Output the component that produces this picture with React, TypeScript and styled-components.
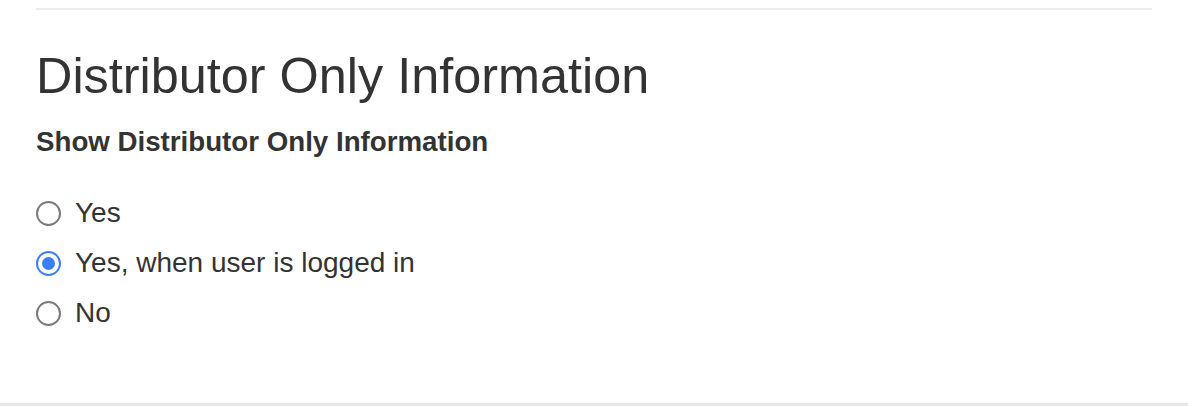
import React, { useState } from 'react'
import styled, { createGlobalStyle } from 'styled-components'

const GlobalStyle = createGlobalStyle`
  html, body {
    margin: 0;
    padding: 0;
    background: #ffffff;
  }
  body {
    font-family: 'Liberation Sans', Arial, Helvetica, sans-serif;
    color: #333333;
  }
`

const Page = styled.div`
  height: 406px;
  display: flex;
  flex-direction: column;
  box-sizing: border-box;
  border-bottom: 3px solid #e6e6e6;
`

const Section = styled.section`
  flex: 1;
  margin: 0 36px;
  padding-top: 8px;
`

const Rule = styled.hr`
  margin: 0;
  border: 0;
  border-top: 2px solid #ececec;
`

const Heading = styled.h2`
  margin: 38px 0 0;
  font-size: 50.4px;
  line-height: 56px;
  font-weight: 400;
  color: #333333;
`

const FieldLabel = styled.h4`
  margin: 22px 0 0;
  font-size: 27.7px;
  line-height: 32px;
  font-weight: 700;
  color: #333333;
`

const Options = styled.div`
  margin-top: 30px;
  display: flex;
  flex-direction: column;
`

const Option = styled.label`
  height: 50px;
  display: flex;
  align-items: center;
  gap: 14px;
  font-size: 28px;
  color: #333333;
  cursor: pointer;
`

const Radio = styled.input.attrs({ type: 'radio' })`
  appearance: none;
  -webkit-appearance: none;
  margin: 0;
  width: 25px;
  height: 25px;
  box-sizing: border-box;
  border-radius: 50%;
  border: 2px solid #7a7a7a;
  background: #ffffff;
  display: grid;
  place-items: center;
  cursor: pointer;

  &:checked {
    border-color: #3a7ff6;
  }

  &:checked::after {
    content: '';
    width: 13px;
    height: 13px;
    border-radius: 50%;
    background: #3a7ff6;
  }
`

const choices = ['Yes', 'Yes, when user is logged in', 'No']

export default function App() {
  const [value, setValue] = useState(choices[1])

  return (
    <Page>
      <GlobalStyle />
      <Section>
        <Rule />
        <Heading>Distributor Only Information</Heading>
        <FieldLabel>Show Distributor Only Information</FieldLabel>
        <Options>
          {choices.map((c) => (
            <Option key={c}>
              <Radio name="distributor-info" checked={value === c} onChange={() => setValue(c)} />
              {c}
            </Option>
          ))}
        </Options>
      </Section>
    </Page>
  )
}
